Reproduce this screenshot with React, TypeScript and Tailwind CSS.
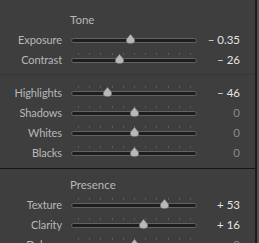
const TICKS = [0, 1, 2, 3, 4, 5, 6, 7, 8, 9, 10];

type Slider = {
  label: string;
  value: string;
  pos: number; // -1..1 along the track
  ticks?: boolean;
};

const tone: Slider[] = [
  { label: "Exposure", value: "– 0.35", pos: -0.07, ticks: false },
  { label: "Contrast", value: "– 26", pos: -0.26 },
];

const toneRange: Slider[] = [
  { label: "Highlights", value: "– 46", pos: -0.46 },
  { label: "Shadows", value: "0", pos: 0 },
  { label: "Whites", value: "0", pos: 0 },
  { label: "Blacks", value: "0", pos: 0 },
];

const presence: Slider[] = [
  { label: "Texture", value: "+ 53", pos: 0.53 },
  { label: "Clarity", value: "+ 16", pos: 0.16 },
  { label: "Dehaze", value: "0", pos: 0 },
];

function Thumb({ left }: { left: number }) {
  return (
    <svg
      width="11"
      height="10"
      viewBox="0 0 11 10"
      className="absolute top-[-4px]"
      style={{ left: left - 5.5 }}
    >
      <path
        d="M5.5 0.3 L9.4 5 Q10.8 9.6 5.5 9.6 Q0.2 9.6 1.6 5 Z"
        fill="#b8b8b8"
        stroke="#707070"
        strokeWidth="0.6"
      />
    </svg>
  );
}

function SliderRow({ s }: { s: Slider }) {
  const thumbX = 63 + s.pos * 57;
  const zero = s.value === "0";
  return (
    <div className="flex h-5 items-center">
      <div className="w-[62px] text-right text-[11px] tracking-[-0.1px]">{s.label}</div>
      <div className="relative ml-[9px] h-[5px] w-[126px]">
        {s.ticks !== false &&
          TICKS.map((t) => (
            <div
              key={t}
              className="absolute top-[-5px] h-[2px] w-px bg-[#5c5c5c]"
              style={{ left: 7 + t * 11.2 }}
            />
          ))}
        <div className="h-[5px] w-full rounded-full border border-[#626262] bg-[#1e1e1e]" />
        <Thumb left={thumbX} />
      </div>
      <div
        className={
          zero
            ? "w-[43px] text-right text-[#8a8a8a]"
            : "w-[43px] text-right text-[#e4e4e4]"
        }
      >
        {s.value}
      </div>
    </div>
  );
}

export default function App() {
  return (
    <div className="flex h-[243px] w-[259px] overflow-hidden bg-[#3e3e3e] font-['Lato',sans-serif] text-[11.5px] text-[#b8b8b8]">
      <div className="w-[255px]">
        <div className="pt-[10px]">
          <div className="flex h-5 items-center pl-[70px]">Tone</div>
          {tone.map((s) => (
            <SliderRow key={s.label} s={s} />
          ))}
        </div>
        <div className="mt-1 h-px bg-[#363636]" />
        <div className="pt-2">
          {toneRange.map((s) => (
            <SliderRow key={s.label} s={s} />
          ))}
        </div>
        <div className="mt-[5px] h-px bg-[#161616]" />
        <div className="pt-[6px]">
          <div className="flex h-5 items-center pl-[70px]">Presence</div>
          {presence.map((s) => (
            <SliderRow key={s.label} s={s} />
          ))}
        </div>
      </div>
      <div className="w-[2px] bg-[#1c1c1c]" />
      <div className="w-[2px] bg-[#505050]" />
    </div>
  );
}
